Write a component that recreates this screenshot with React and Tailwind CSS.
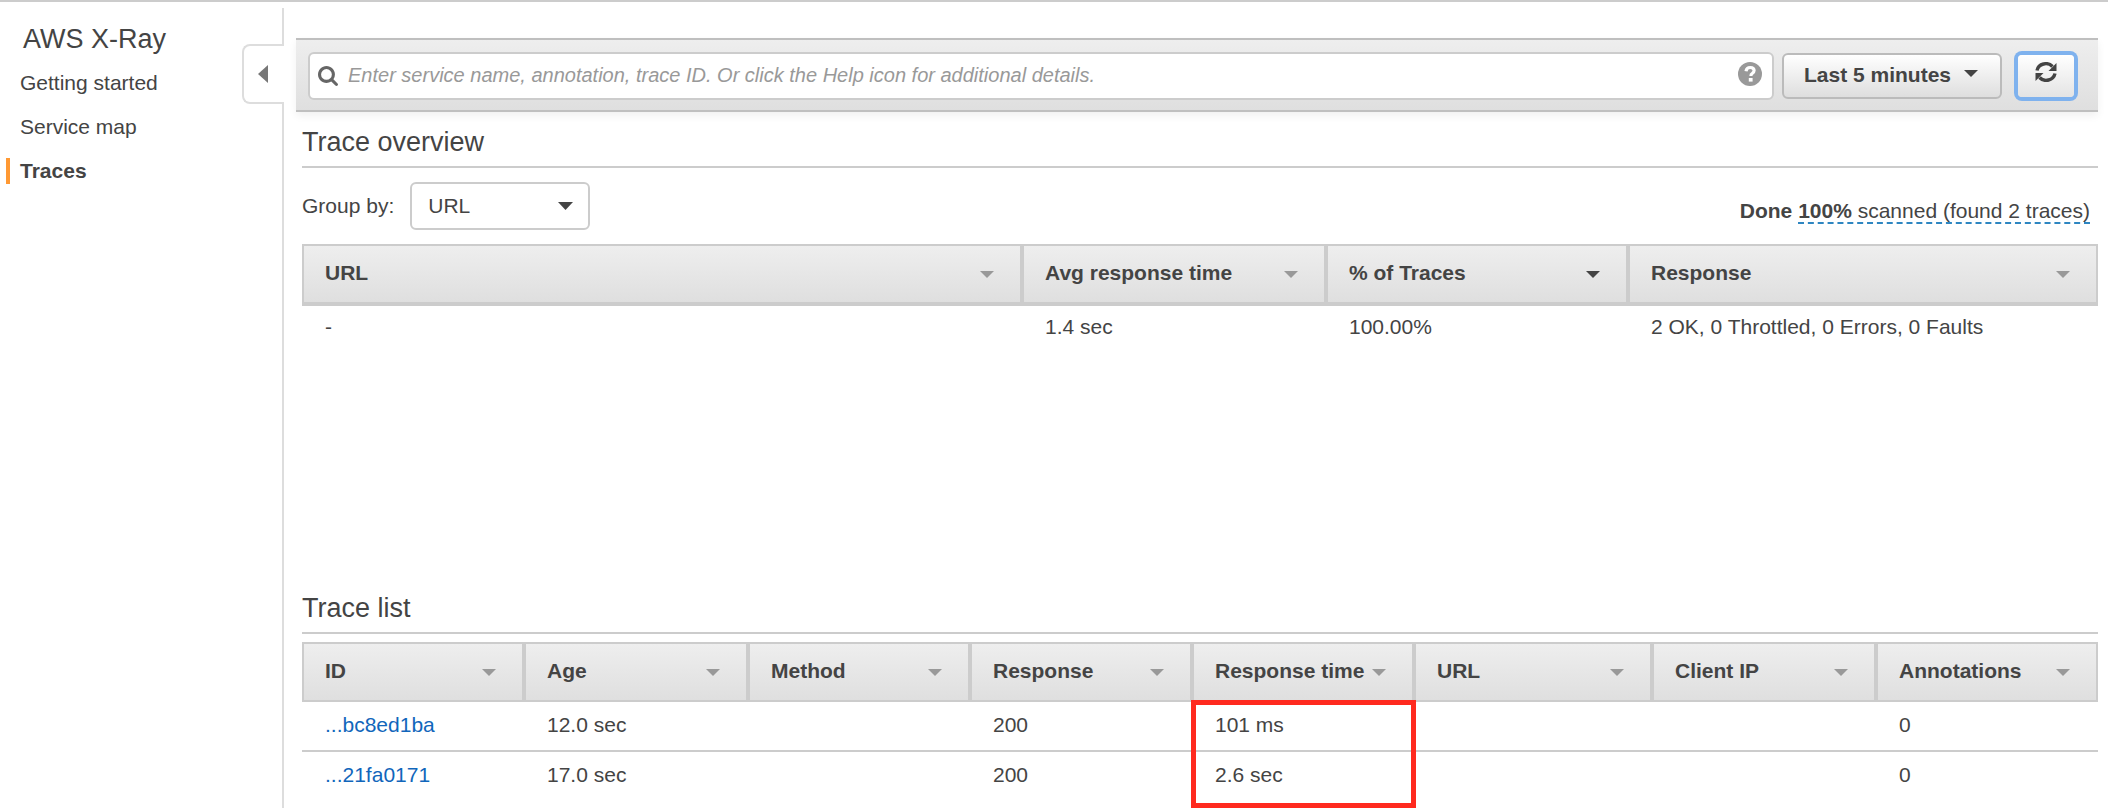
import React from "react";

const overviewColumns = [
  { label: "URL", width: "" },
  { label: "Avg response time", width: "w-[304px]" },
  { label: "% of Traces", width: "w-[302px]", sorted: true },
  { label: "Response", width: "w-[470px]" },
];

const listColumns = [
  { label: "ID", width: "w-[222px]" },
  { label: "Age", width: "w-[224px]" },
  { label: "Method", width: "w-[222px]" },
  { label: "Response", width: "w-[222px]" },
  { label: "Response time", width: "w-[222px]" },
  { label: "URL", width: "" },
  { label: "Client IP", width: "w-[224px]" },
  { label: "Annotations", width: "w-[222px]" },
];

const traces = [
  { id: "...bc8ed1ba", age: "12.0 sec", response: "200", time: "101 ms" },
  { id: "...21fa0171", age: "17.0 sec", response: "200", time: "2.6 sec" },
];

function Caret({ className }) {
  return (
    <svg viewBox="0 0 14 7" aria-hidden="true" preserveAspectRatio="none" className={className}>
      <path d="M0 0h14l-7 7z" fill="currentColor" />
    </svg>
  );
}

function HeaderCell({ label, width, sorted, thick }) {
  return (
    <th
      scope="col"
      className={`${width} ${thick ? "h-[62px] border-b-4" : "h-[60px] border-b-2"} border-2 border-[#ccc] bg-linear-to-b from-[#eee] to-[#dfdfdf] p-0 text-left font-bold`}
    >
      <button type="button" className="flex w-full items-center justify-between pr-[26px] pb-[2px] pl-[21px] whitespace-nowrap">
        {label}
        <Caret className={`mt-[2px] h-[7px] w-[14px] shrink-0 ${sorted ? "text-[#444]" : "text-[#999]"}`} />
      </button>
    </th>
  );
}

function Sidebar() {
  const item = "block h-[26px] border-l-4 pl-[10px] leading-[26px]";
  return (
    <aside className="relative w-[284px] shrink-0 pt-[6px]">
      <div className="min-h-[800px] border-r-2 border-[#ddd] pt-[15px] pl-[6px]">
        <h1 className="pl-[17px] text-[27px] leading-8">AWS X-Ray</h1>
        <nav className="mt-[15px] flex flex-col gap-[18px]">
          <a href="#start" className={`${item} border-transparent`}>Getting started</a>
          <a href="#map" className={`${item} border-transparent`}>Service map</a>
          <a href="#traces" aria-current="page" className={`${item} border-[#ff9933] font-bold`}>Traces</a>
        </nav>
      </div>
      <button
        type="button"
        aria-label="Collapse navigation"
        className="absolute top-[42px] right-0 flex h-[60px] w-[42px] items-center rounded-l-lg border-2 border-r-0 border-[#ddd] bg-white pl-[14px]"
      >
        <svg viewBox="0 0 10 18" aria-hidden="true" className="h-[18px] w-[10px]">
          <path d="M10 0v18L0 9z" fill="#777" />
        </svg>
      </button>
    </aside>
  );
}

function Toolbar() {
  return (
    <div className="flex items-center border-y-2 border-[#bfbfbf] bg-linear-to-b from-[#eee] to-[#dfdfdf] pt-3 pr-6 pb-[10px] pl-3 shadow-[0_4px_8px_rgba(0,0,0,0.06)]">
      <div className="flex h-12 grow items-center rounded-md border-2 border-[#ccc] bg-white px-2">
        <svg viewBox="0 0 1664 1664" aria-hidden="true" className="h-5 w-5 shrink-0 text-[#666]">
          <path
            transform="translate(0 -128)"
            fill="currentColor"
            d="M1152 832q0-185-131.500-316.500t-316.500-131.500-316.500 131.500-131.500 316.500 131.500 316.500 316.500 131.500 316.500-131.500 131.500-316.500zm512 832q0 52-38 90t-90 38q-54 0-90-38l-343-342q-179 124-399 124-143 0-273.500-55.500t-225-150-150-225-55.500-273.500 55.500-273.500 150-225 225-150 273.500-55.500 273.500 55.500 225 150 150 225 55.500 273.500q0 220-124 399l343 343q37 37 37 90z"
          />
        </svg>
        <input
          type="text"
          aria-label="Search traces"
          placeholder="Enter service name, annotation, trace ID. Or click the Help icon for additional details."
          className="ml-[10px] h-full grow bg-transparent pb-[2px] text-[20px] italic outline-none placeholder:text-[#999]"
        />
        <button type="button" aria-label="Help" className="mr-[2px] mb-1 shrink-0">
          <svg viewBox="0 0 24 24" aria-hidden="true" className="h-6 w-6">
            <circle cx="12" cy="12" r="12" fill="#999" />
            <path d="M8 9.200q.600-3.700 4.200-3.700 3.900 0 3.900 3.100 0 1.700-1.900 2.900-1.300.800-1.300 2.600" fill="none" stroke="#fff" strokeWidth="3.200" />
            <path d="M10.800 16h3.800v3.600h-3.800z" fill="#fff" />
          </svg>
        </button>
      </div>
      <button
        type="button"
        className="ml-2 flex h-[46px] w-[220px] shrink-0 items-center justify-between rounded-md border-2 border-[#bbb] bg-linear-to-b from-white to-[#dedede] pr-[22px] pb-[2px] pl-5 font-bold"
      >
        Last 5 minutes
        <Caret className="mb-1 h-[7px] w-[14px]" />
      </button>
      <button
        type="button"
        aria-label="Refresh"
        className="ml-4 flex h-[42px] w-[56px] shrink-0 items-center justify-center rounded-sm bg-linear-to-b from-white to-[#e4e4e4] shadow-[0_0_0_4px_#7fb2ee]"
      >
        <svg viewBox="0 0 22 20" aria-hidden="true" className="mb-2 h-5 w-[22px]">
          <g fill="none" stroke="#444" strokeWidth="3.400">
            <path d="M2 8.500a9 8.500 0 0 1 15.500-4" />
            <path d="M20 11.500a9 8.500 0 0 1-15.500 4" />
          </g>
          <path d="M21.500 1v8h-8zM.500 19v-8h8z" fill="#444" />
        </svg>
      </button>
    </div>
  );
}

export default function App() {
  const section = "border-b-2 border-[#ccc] text-[27px] leading-8";
  return (
    <div
      className={'flex min-h-screen overflow-hidden border-t-2 border-[#ccc] bg-white text-[21px] leading-6 text-[#444] font-["Liberation_Sans",Arial,sans-serif]'}
    >
      <Sidebar />
      <main className="min-w-0 grow pt-9 pr-[10px] pl-3">
        <Toolbar />
        <div className="pl-[6px]">
          <section className="h-[466px]">
            <h2 className={`${section} pt-[14px] pb-2`}>Trace overview</h2>
            <div className="mt-[14px] flex items-center justify-between">
              <label className="flex items-center gap-4">
                Group by:
                <span className="relative flex items-center">
                  <select className="h-12 w-[180px] appearance-none rounded-md border-2 border-[#ccc] bg-white pl-4">
                    <option>URL</option>
                  </select>
                  <Caret className="pointer-events-none absolute right-[17px] h-2 w-[15px]" />
                </span>
              </label>
              <p className="mt-[10px] mr-2">
                <b>Done</b>{" "}
                <span className="border-b-2 border-dashed border-[#2e86c1]">
                  <b>100%</b> scanned (found 2 traces)
                </span>
              </p>
            </div>
            <table className="mt-[14px] w-full table-fixed border-separate border-spacing-0">
              <thead>
                <tr>
                  {overviewColumns.map((c) => (
                    <HeaderCell key={c.label} {...c} thick />
                  ))}
                </tr>
              </thead>
              <tbody>
                <tr>
                  {["-", "1.4 sec", "100.00%", "2 OK, 0 Throttled, 0 Errors, 0 Faults"].map((v) => (
                    <td key={v} className="h-[44px] pt-0 pb-[2px] pl-[23px]">{v}</td>
                  ))}
                </tr>
              </tbody>
            </table>
          </section>
          <section>
            <h2 className={`${section} pt-[14px] pb-2`}>Trace list</h2>
            <table className="mt-2 w-full table-fixed border-separate border-spacing-0">
              <thead>
                <tr>
                  {listColumns.map((c) => (
                    <HeaderCell key={c.label} {...c} />
                  ))}
                </tr>
              </thead>
              <tbody className="[&_td]:h-[50px] [&_td]:border-b-2 [&_td]:border-[#ccc] [&_td]:pt-0 [&_td]:pb-[2px] [&_td]:pl-[23px] [&_tr:last-child_td]:border-transparent">
                {traces.map((t, i) => (
                  <tr key={t.id}>
                    <td><a href="#trace" className="text-[#1166bb]">{t.id}</a></td>
                    <td>{t.age}</td>
                    <td></td>
                    <td>{t.response}</td>
                    <td className="relative">
                      {t.time}
                      {i === 0 && (
                        <span className="pointer-events-none absolute -top-[2px] -left-px h-[108px] w-[225px] border-[5px] border-[#ff2a1f]" />
                      )}
                    </td>
                    <td></td>
                    <td></td>
                    <td>0</td>
                  </tr>
                ))}
              </tbody>
            </table>
          </section>
        </div>
      </main>
    </div>
  );
}
